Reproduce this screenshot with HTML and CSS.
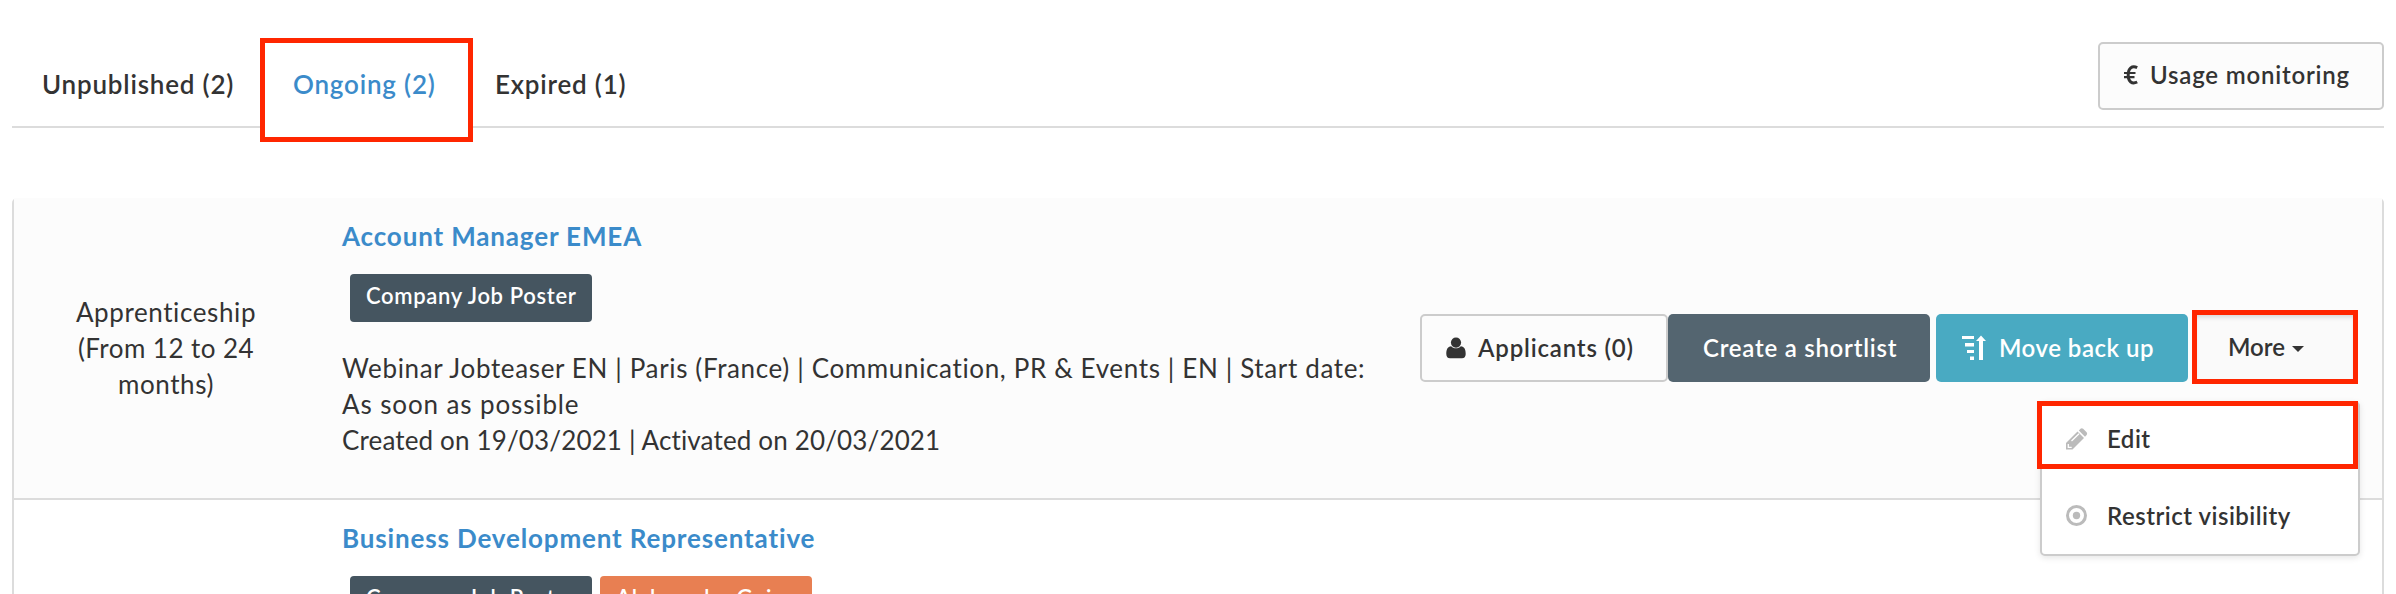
FILE: index.html
```html
<!DOCTYPE html>
<html lang="en">
<head>
<meta charset="utf-8">
<title>Job offers</title>
<link rel="stylesheet" href="styles.css">
</head>
<body>
<header class="topbar">
  <nav class="tabs">
    <a class="tab tab-unpublished"><span>Unpublished (2)</span></a>
    <a class="tab tab-ongoing"><span>Ongoing (2)</span></a>
    <a class="tab tab-expired"><span>Expired (1)</span></a>
  </nav>
  <a class="btn btn-default btn-usage">
    <svg class="icon-euro" width="14" height="20" viewBox="0 0 14 20"><path d="M13.2 2.600C8 .1 4.200 3.200 4.200 10s3.800 9.500 9 7" fill="none" stroke="#333" stroke-width="3"/><path d="M0 8h11.500M0 12.200h10.500" stroke="#333" stroke-width="2.200"/></svg>
    <span class="t-usage">Usage monitoring</span>
  </a>
</header>
<main class="offers">
  <article class="offer offer-first">
    <div class="contract"><span class="t-c1">Apprenticeship</span><span class="t-c2">(From 12 to 24</span><span class="t-c3">months)</span></div>
    <div class="details">
      <h2 class="title"><span class="t-title1">Account Manager EMEA</span></h2>
      <div class="badges"><span class="badge badge-company"><span class="t-badge">Company Job Poster</span></span></div>
      <p class="info"><span class="t-i1">Webinar Jobteaser EN | Paris (France) | Communication, PR &amp; Events | EN | Start date:</span><span class="t-i2">As soon as possible</span><span class="t-i3">Created on 19/03/2021 | Activated on 20/03/2021</span></p>
    </div>
    <div class="actions">
      <a class="btn btn-default btn-applicants">
        <svg width="20" height="22" viewBox="0 0 20 22" fill="#333"><circle cx="10" cy="5.600" r="5.100"/><path d="M5.200 9.200C1.500 9.500.3 12.500.3 17c0 2.800 1.400 4.300 3.700 4.300h12c2.300 0 3.700-1.500 3.700-4.300 0-4.500-1.200-7.500-4.900-7.800C12.500 12 7.500 12 5.200 9.200z"/></svg>
        <span class="t-app">Applicants (0)</span>
      </a>
      <a class="btn btn-dark"><span class="t-create">Create a shortlist</span></a>
      <a class="btn btn-info">
        <svg width="24" height="26" viewBox="0 0 24 26" fill="#fff"><path d="M0 1h12v3H0zM3 8h9v3.500H3zM5 15h7v3H5zM8 21.500h4V25H8zM17 25V6h-3l5-5.500L24 6h-3v19z"/></svg>
        <span class="t-move">Move back up</span>
      </a>
      <a class="btn btn-more"><span class="t-more">More</span><i class="caret"></i></a>
      <div class="menu">
        <a class="menu-item menu-edit">
          <svg width="22" height="22" viewBox="0 0 22 22"><path d="M0 21.500V15L11.500 3.500l6.500 6.500L6.500 21.500z" fill="#bbb"/><path d="M12.800 2.400l1.700-1.600q1.300-1 2.600 0l3.500 3.500q1 1.300 0 2.600L19 8.700z" fill="#bbb"/><path d="M5.500 13L13 5.800M2.300 16v3.300h3.400" fill="none" stroke="#fff" stroke-width="1.300"/></svg>
          <span class="t-edit">Edit</span>
        </a>
        <a class="menu-item">
          <svg width="22" height="22" viewBox="0 0 22 22"><circle cx="10.500" cy="10.500" r="9" fill="none" stroke="#bbb" stroke-width="3"/><circle cx="10.500" cy="10.500" r="3.700" fill="#bbb"/></svg>
          <span class="t-restrict">Restrict visibility</span>
        </a>
      </div>
    </div>
  </article>
  <article class="offer">
    <div class="contract"></div>
    <div class="details">
      <h2 class="title"><span class="t-title2">Business Development Representative</span></h2>
      <div class="badges"><span class="badge badge-company"><span class="t-badge">Company Job Poster</span></span><span class="badge badge-owner"><span class="t-owner">Aleksandra Guise</span></span></div>
    </div>
  </article>
</main>
</body>
</html>
```
FILE: styles.css
```css
* { box-sizing: border-box; }
body {
  margin: 0;
  height: 594px;
  overflow: hidden;
  background: #fff;
  color: #333;
  font: 26px/36px Lato, "Open Sans", sans-serif;
  font-variant-ligatures: none;
}
span { white-space: nowrap; }
svg { display: block; flex: none; }
.topbar {
  display: flex;
  justify-content: space-between;
  align-items: flex-start;
  height: 128px;
  margin: 0 12px;
  border-bottom: 2px solid #dcdcdc;
}
.tabs { display: flex; padding-top: 38px; font-weight: 600; letter-spacing: .8px; }
.tab { height: 104px; padding: 28px 0 0 30px; }
.tab-unpublished { width: 248px; }
.tab-ongoing {
  width: 213px;
  padding: 23px 0 0 28px;
  border: 5px solid #ff2600;
  background: #fff;
  color: #3b8bca;
}
.tab-expired { padding-left: 22px; }

.btn {
  display: flex;
  align-items: center;
  height: 68px;
  border-radius: 5px;
  font-size: 24px;
  font-weight: 600;
}
.btn-default { border: 2px solid #ccc; background: #fcfcfc; }
.btn-usage { width: 286px; margin-top: 42px; padding: 0 0 2px 24px; gap: 12px; letter-spacing: .8px; }

.offers {
  height: 396px;
  margin: 70px 12px 0;
  border: solid #dcdcdc;
  border-width: 0 2px;
  border-radius: 5px 5px 0 0;
}
.offer { display: flex; height: 302px; }
.offer-first { background: #fcfcfc; border-bottom: 2px solid #dcdcdc; }
.offer:last-child { height: 94px; }
.contract {
  display: flex;
  flex-direction: column;
  align-items: center;
  width: 328px;
  padding: 96px 24px 0 0;
}
.details { width: 1078px; }
.title { margin: 0; padding-top: 20px; font-size: 26px; line-height: 36px; font-weight: 700; color: #3b8bca; }
.badges { display: flex; gap: 8px; padding: 20px 0 0 8px; }
.badge {
  height: 48px;
  padding: 4px 0 0 16px;
  border-radius: 4px;
  color: #fff;
  font-size: 22px;
  font-weight: 600;
  letter-spacing: .65px;
}
.badge-company { width: 242px; background: #455560; }
.badge-owner { width: 212px; background: #e87f52; }
.info { display: flex; flex-direction: column; align-items: flex-start; margin: 28px 0 0; }

.t-c1, .t-c3 { letter-spacing: .6px; }
.t-c2 { letter-spacing: .45px; }
.t-title1, .t-title2 { letter-spacing: .85px; }
.t-i1 { letter-spacing: .64px; }
.t-i2 { letter-spacing: .88px; }
.t-i3 { letter-spacing: .15px; }
.t-app { letter-spacing: .83px; }
.t-create { letter-spacing: .75px; }
.t-move { letter-spacing: .5px; }
.t-edit, .t-restrict { letter-spacing: .5px; }

.actions { position: relative; display: flex; padding-top: 116px; }
.btn-applicants { width: 248px; padding: 0 0 0 24px; gap: 12px; }
.btn-dark { width: 262px; padding-left: 35px; background: #546570; color: #fff; }
.btn-info { width: 252px; margin-left: 6px; padding-left: 26px; gap: 13px; background: #49aac2; color: #fff; }
.btn-more {
  width: 166px;
  height: 74px;
  margin: -4px 0 0 4px;
  padding: 0 0 0 31px;
  gap: 7px;
  border: 5px solid #ff2600;
  border-radius: 0;
  background: #fafafa;
  box-shadow: inset 0 4px 5px -2px rgba(0, 0, 0, .15);
}
.caret { margin-top: 3px; border: solid transparent; border-width: 6px 6px 0; border-top-color: #333; }
.menu {
  position: absolute;
  top: 203px;
  left: 620px;
  width: 320px;
  height: 155px;
  border: 2px solid #ccc;
  border-radius: 5px;
  background: #fff;
  box-shadow: 0 2px 6px rgba(0, 0, 0, .1);
  font-size: 24px;
  font-weight: 600;
}
.menu-item { display: flex; align-items: center; gap: 19px; height: 86px; padding: 7px 0 0 24px; }
.menu-edit { width: 321px; height: 68px; margin: -2px 0 0 -5px; border: 5px solid #ff2600; padding: 8px 0 0 24px; }
```
